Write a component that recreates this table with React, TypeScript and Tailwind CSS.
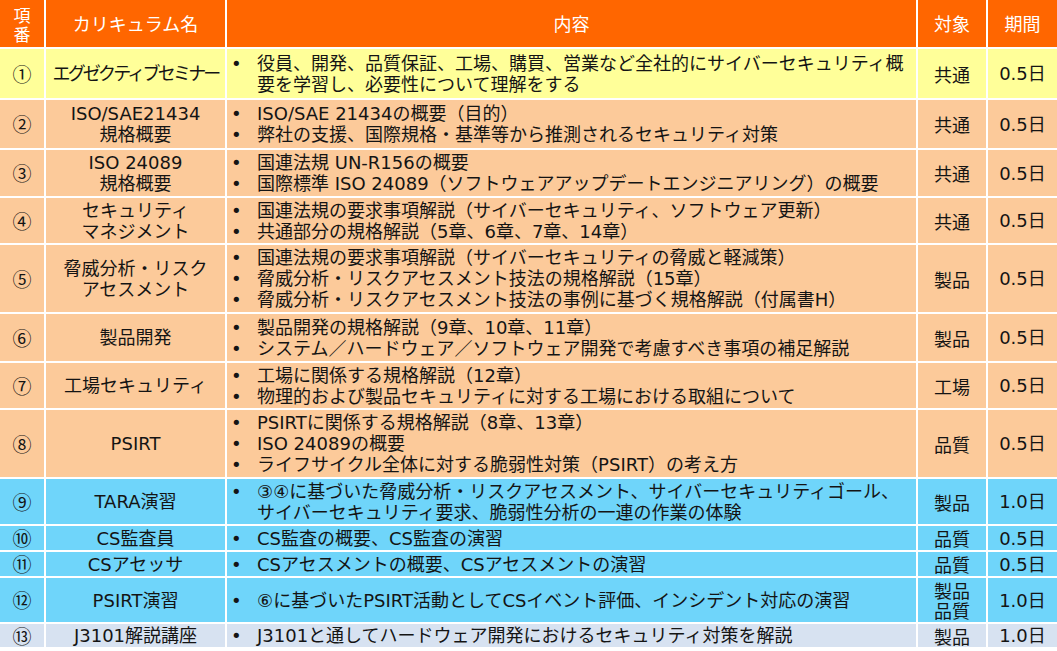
import React from 'react';

type Row = {
  no: string;
  name: string[];
  nameClass?: string;
  items: string[];
  target: string[];
  term: string;
  bg: string;
  h: string;
};

const rows: Row[] = [
  {
    no: '①',
    name: ['エグゼクティブセミナー'],
    nameClass: 'tracking-[-2.8px] whitespace-nowrap',
    items: ['役員、開発、品質保証、工場、購買、営業など全社的にサイバーセキュリティ概要を学習し、必要性について理解をする'],
    target: ['共通'],
    term: '0.5日',
    bg: 'bg-[#ffff99]',
    h: 'h-[51px]',
  },
  {
    no: '②',
    name: ['ISO/SAE21434', '規格概要'],
    items: ['ISO/SAE 21434の概要（目的）', '弊社の支援、国際規格・基準等から推測されるセキュリティ対策'],
    target: ['共通'],
    term: '0.5日',
    bg: 'bg-[#fcca9a]',
    h: 'h-[50px]',
  },
  {
    no: '③',
    name: ['ISO 24089', '規格概要'],
    items: ['国連法規 UN-R156の概要', '国際標準 ISO 24089（ソフトウェアアップデートエンジニアリング）の概要'],
    target: ['共通'],
    term: '0.5日',
    bg: 'bg-[#fcca9a]',
    h: 'h-[48px]',
  },
  {
    no: '④',
    name: ['セキュリティ', 'マネジメント'],
    items: ['国連法規の要求事項解説（サイバーセキュリティ、ソフトウェア更新）', '共通部分の規格解説（5章、6章、7章、14章）'],
    target: ['共通'],
    term: '0.5日',
    bg: 'bg-[#fcca9a]',
    h: 'h-[47px]',
  },
  {
    no: '⑤',
    name: ['脅威分析・リスク', 'アセスメント'],
    items: [
      '国連法規の要求事項解説（サイバーセキュリティの脅威と軽減策）',
      '脅威分析・リスクアセスメント技法の規格解説（15章）',
      '脅威分析・リスクアセスメント技法の事例に基づく規格解説（付属書H）',
    ],
    target: ['製品'],
    term: '0.5日',
    bg: 'bg-[#fcca9a]',
    h: 'h-[69px]',
  },
  {
    no: '⑥',
    name: ['製品開発'],
    items: ['製品開発の規格解説（9章、10章、11章）', 'システム／ハードウェア／ソフトウェア開発で考慮すべき事項の補足解説'],
    target: ['製品'],
    term: '0.5日',
    bg: 'bg-[#fcca9a]',
    h: 'h-[49px]',
  },
  {
    no: '⑦',
    name: ['工場セキュリティ'],
    items: ['工場に関係する規格解説（12章）', '物理的および製品セキュリティに対する工場における取組について'],
    target: ['工場'],
    term: '0.5日',
    bg: 'bg-[#fcca9a]',
    h: 'h-[47px]',
  },
  {
    no: '⑧',
    name: ['PSIRT'],
    items: ['PSIRTに関係する規格解説（8章、13章）', 'ISO 24089の概要', 'ライフサイクル全体に対する脆弱性対策（PSIRT）の考え方'],
    target: ['品質'],
    term: '0.5日',
    bg: 'bg-[#fcca9a]',
    h: 'h-[69px]',
  },
  {
    no: '⑨',
    name: ['TARA演習'],
    items: ['③④に基づいた脅威分析・リスクアセスメント、サイバーセキュリティゴール、サイバーセキュリティ要求、脆弱性分析の一連の作業の体験'],
    target: ['製品'],
    term: '1.0日',
    bg: 'bg-[#6fd5fa]',
    h: 'h-[47px]',
  },
  {
    no: '⑩',
    name: ['CS監査員'],
    items: ['CS監査の概要、CS監査の演習'],
    target: ['品質'],
    term: '0.5日',
    bg: 'bg-[#6fd5fa]',
    h: 'h-[26px]',
  },
  {
    no: '⑪',
    name: ['CSアセッサ'],
    items: ['CSアセスメントの概要、CSアセスメントの演習'],
    target: ['品質'],
    term: '0.5日',
    bg: 'bg-[#6fd5fa]',
    h: 'h-[26px]',
  },
  {
    no: '⑫',
    name: ['PSIRT演習'],
    items: ['⑥に基づいたPSIRT活動としてCSイベント評価、インシデント対応の演習'],
    target: ['製品', '品質'],
    term: '1.0日',
    bg: 'bg-[#6fd5fa]',
    h: 'h-[46px]',
  },
  {
    no: '⑬',
    name: ['J3101解説講座'],
    items: ['J3101と通してハードウェア開発におけるセキュリティ対策を解説'],
    target: ['製品'],
    term: '1.0日',
    bg: 'bg-[#d7e2f1]',
    h: 'h-[25px]',
  },
];

export default function App() {
  return (
    <div className="w-[1057px] h-[651px] bg-white overflow-hidden font-['DejaVu_Sans','Noto_Sans_CJK_JP',sans-serif] text-[#141414]">
      <table className="w-[1057px] table-fixed border-collapse text-[18px] leading-[21px]">
        <colgroup>
          <col className="w-[45px]" />
          <col className="w-[181px]" />
          <col className="w-[691px]" />
          <col className="w-[70px]" />
          <col className="w-[70px]" />
        </colgroup>
        <thead>
          <tr className="h-[48px] bg-[#ff6600] text-white">
            <th className="border-2 border-t-0 border-l-0 border-white font-normal font-['Noto_Sans_CJK_JP',sans-serif] text-[17px] leading-[19px]">
              <div className="h-[19px]">項</div>
              <div className="h-[19px]">番</div>
            </th>
            <th className="border-2 border-t-0 border-white font-normal font-['Noto_Sans_CJK_JP',sans-serif]">カリキュラム名</th>
            <th className="border-2 border-t-0 border-white font-normal font-['Noto_Sans_CJK_JP',sans-serif]">内容</th>
            <th className="border-2 border-t-0 border-white font-normal font-['Noto_Sans_CJK_JP',sans-serif]">対象</th>
            <th className="border-2 border-t-0 border-r-0 border-white font-normal font-['Noto_Sans_CJK_JP',sans-serif]">期間</th>
          </tr>
        </thead>
        <tbody>
          {rows.map((r) => (
            <tr key={r.no} className={`${r.bg} ${r.h}`}>
              <td className="border-2 border-l-0 border-white text-center font-['Noto_Sans_CJK_JP',sans-serif] text-[19px] leading-[20px]">{r.no}</td>
              <td className={`border-2 border-white text-center ${r.nameClass ?? ''}`}>
                {r.name.map((n) => (
                  <div key={n}>{n}</div>
                ))}
              </td>
              <td className="border-2 border-white pl-[2px] pr-2 align-middle">
                <ul>
                  {r.items.map((it) => (
                    <li key={it} className="flex">
                      <span className="w-[28px] shrink-0 pl-[2px]">•</span>
                      <span>{it}</span>
                    </li>
                  ))}
                </ul>
              </td>
              <td className="border-2 border-white text-center font-['Noto_Sans_CJK_JP',sans-serif] leading-[20px]">
                {r.target.map((t) => (
                  <div key={t}>{t}</div>
                ))}
              </td>
              <td className="border-2 border-r-0 border-white text-center">{r.term}</td>
            </tr>
          ))}
        </tbody>
      </table>
    </div>
  );
}
